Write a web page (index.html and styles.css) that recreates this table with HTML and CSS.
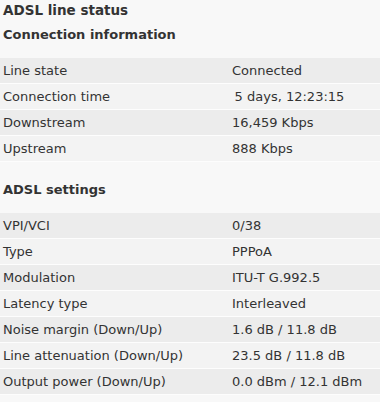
FILE: index.html
```html
<!DOCTYPE html>
<html lang="en">
<head>
	<meta charset="UTF-8">
	<title>ADSL line status</title>
	<link rel="stylesheet" href="styles.css">
</head>
<body>
	<h1>ADSL line status</h1>
	<h2>Connection information</h2>
	<table class="status">
		<tr><td>Line state</td><td>Connected</td></tr>
		<tr><td>Connection time</td><td>&thinsp;5 days, 12:23:15</td></tr>
		<tr><td>Downstream</td><td>16,459 Kbps</td></tr>
		<tr><td>Upstream</td><td>888 Kbps</td></tr>
	</table>
	<h2 class="gap">ADSL settings</h2>
	<table class="status">
		<tr><td>VPI/VCI</td><td>0/38</td></tr>
		<tr><td>Type</td><td>PPPoA</td></tr>
		<tr><td>Modulation</td><td>ITU-T G.992.5</td></tr>
		<tr><td>Latency type</td><td>Interleaved</td></tr>
		<tr><td>Noise margin (Down/Up)</td><td>1.6 dB / 11.8 dB</td></tr>
		<tr><td>Line attenuation (Down/Up)</td><td>23.5 dB / 11.8 dB</td></tr>
		<tr><td>Output power (Down/Up)</td><td>0.0 dBm / 12.1 dBm</td></tr>
	</table>
</body>
</html>
```
FILE: styles.css
```css
*{margin: 0; padding: 0;}
body{background: #f8f8f8; color: #333; font-family: "DejaVu Sans", Verdana, sans-serif; font-size: 13px;}

h1{padding-left: 3px; font-size: 13.5px; line-height: 20px; font-weight: bold;}
h2{margin-top: 5px; padding-left: 3px; font-size: 13px; line-height: 20px; font-weight: bold;}
h2.gap{margin-top: 18px;}

.status{width: 100%; margin-top: 13px; border-collapse: collapse;}
.status td{height: 24px; padding: 1px 0 0 3px; border-bottom: 1px solid #fdfdfd; line-height: 24px; white-space: nowrap; vertical-align: top;}
.status td:first-child{width: 226px;}
.status tr:nth-child(odd){background: #ececec;}
.status tr:nth-child(even){background: #f3f3f3;}
```
